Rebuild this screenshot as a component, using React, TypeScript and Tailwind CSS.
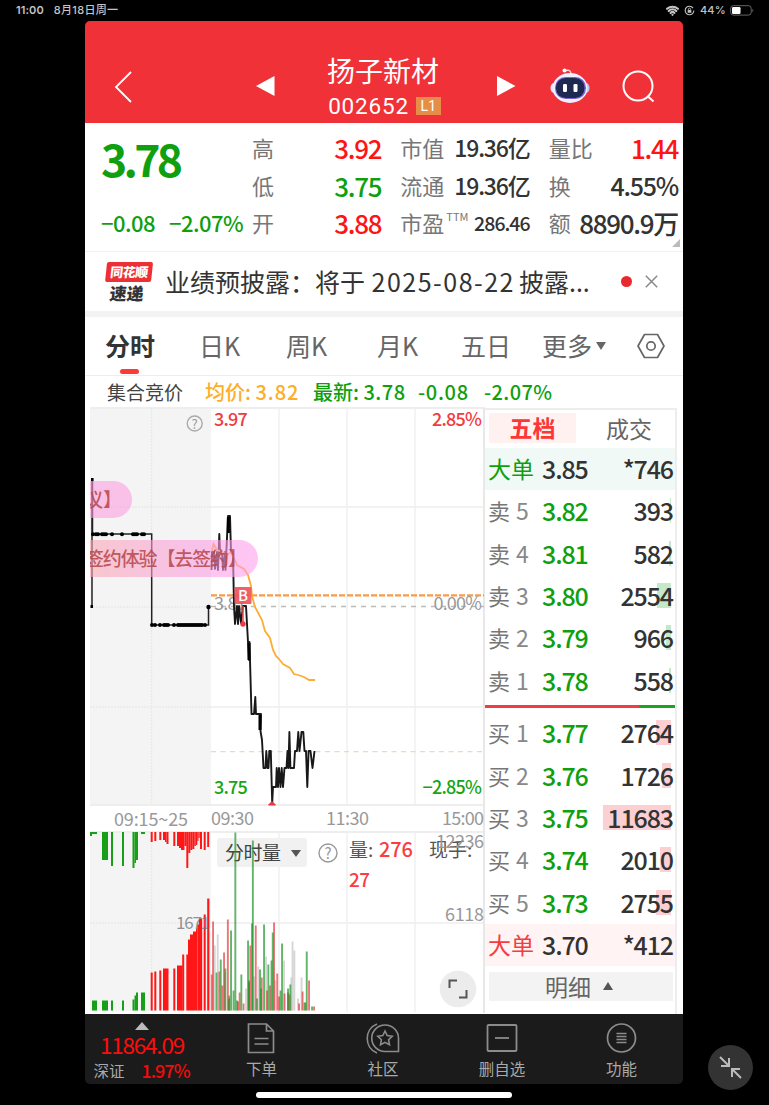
import React from 'react';
import { Wifi } from 'lucide-react';

const quoteColumns = [
  [
    { label: '高', value: '3.92', style: 'text-[26px] font-medium text-[#ff1414]' },
    { label: '低', value: '3.75', style: 'text-[26px] font-medium text-[#0f9f0f]' },
    { label: '开', value: '3.88', style: 'text-[26px] font-medium text-[#ff1414]' },
  ],
  [
    { label: '市值', value: '19.36亿', style: 'text-[23px] font-medium text-[#333]' },
    { label: '流通', value: '19.36亿', style: 'text-[23px] font-medium text-[#333]' },
    { label: '市盈', sup: 'TTM', value: '286.46', style: 'text-[19.5px] font-medium text-[#333]' },
  ],
  [
    { label: '量比', value: '1.44', style: 'text-[26px] font-medium text-[#ff1414]' },
    { label: '换', value: '4.55%', style: 'text-[25px] font-medium text-[#333]' },
    { label: '额', value: '8890.9万', style: 'text-[26px] font-medium text-[#333]' },
  ],
];

const sells = [
  { label: '卖', level: 5, price: '3.82', amount: '393', depth: 1 },
  { label: '卖', level: 4, price: '3.81', amount: '582', depth: 2 },
  { label: '卖', level: 3, price: '3.80', amount: '2554', depth: 14 },
  { label: '卖', level: 2, price: '3.79', amount: '966', depth: 5 },
  { label: '卖', level: 1, price: '3.78', amount: '558', depth: 2 },
];

const buys = [
  { label: '买', level: 1, price: '3.77', amount: '2764', depth: 15 },
  { label: '买', level: 2, price: '3.76', amount: '1726', depth: 9 },
  { label: '买', level: 3, price: '3.75', amount: '11683', depth: 68 },
  { label: '买', level: 4, price: '3.74', amount: '2010', depth: 11 },
  { label: '买', level: 5, price: '3.73', amount: '2755', depth: 15 },
];

const averageLine =
  '212,551 213.5,544 217,550 222,552 227,555 231,552 237,565 244,569 248,575 251,586 252,596 255,607 262,620 265,631 270,638 273,650 276,656 279,659 283,664 290,668 294,674 298,675 304,677 309,680 315,680';

const priceLine =
  '211.5,570 212,552 214,552 215,569 217,552 218,570 219.3,534 220,552 222,552 223,570 225,552 225.5,570 228,516 230,516 231,552 233,554 234,606 235,624 237,606 238,624 239,606 241,623 243,606 246,606 248,642 249,660 249.5,642 251.5,714 254,714 255.3,697 256,714 261,714 260.5,731 262,740 263.5,768 265.5,768 266.3,751 267.5,768 268.5,768 269.3,751 270.8,751 272.2,803 273,787 276,787 276.7,768 278,787 279,768 280.5,787 281.7,768 283,787 284.5,768 286.5,768 287.5,751 288.4,768 289.4,732 290.4,768 294,768 295,751 297,751 298.3,732 299.5,751 301.5,732 303.3,732 304.5,751 306,751 307.3,787 308.6,751 310.5,751 312.5,768 314.5,751';

// [x, width, height]
const auctionTopGreen = [
  [90, 2, 4], [92, 5, 2], [102, 6, 28], [111, 2, 34], [122, 2, 34], [132.5, 2, 36], [134.5, 1.5, 31], [136, 2, 28], [141, 4, 2],
];
const auctionTopRed = [
  [150.7, 2, 10], [154.3, 2, 9], [159.3, 2, 8], [163, 2, 8], [165, 1.5, 10], [166.5, 2, 12], [173.3, 2, 14], [177, 2, 14],
  [179, 2, 16], [181, 3.5, 18], [184.5, 2, 14], [186.3, 2, 36], [188.3, 2, 21], [190.3, 2, 18], [192.3, 2, 17],
  [194.3, 1.5, 14], [195.8, 1.5, 13], [197.3, 1.2, 9], [198.5, 1.2, 6], [200, 2, 17], [203.7, 2, 18], [207.2, 2, 15],
];
const auctionGreen = [
  [92, 5, 10], [102, 6, 10], [111, 2, 10], [122, 2, 10], [132.5, 2, 11], [134.5, 1.5, 15], [136, 2, 18], [141, 4, 18],
];
const auctionRed = [
  [150.7, 2, 38], [154.3, 2, 39], [159.3, 2, 40], [163, 5.5, 42], [173.3, 2, 42], [177, 5.5, 45], [182.2, 2, 56],
  [186.3, 2, 56], [188, 2, 71], [190, 3, 76], [193, 3, 79], [196, 1.5, 82], [197.5, 1.5, 86], [199, 3.2, 92],
  [203.7, 2, 96], [207.2, 2.2, 112],
];

// [x, height]
const volumeGrey = [
  [214.7, 65], [217.7, 76], [225, 38], [246, 22], [254, 34], [258.3, 44], [266, 54], [275, 30], [284, 50], [291.3, 33], [292.5, 69], [294.3, 60], [301.5, 33], [298, 12],
];
const volumeGreen = [
  [216.5, 38], [220.7, 51], [225.3, 42], [231, 80], [233.5, 20], [235.3, 178], [237, 10], [241.3, 36], [248, 70], [249, 30],
  [252, 87], [252.8, 170], [257, 12], [260, 41], [261, 22], [264, 86], [268.3, 46], [271.5, 50], [272.7, 78], [280.5, 20],
  [282, 67], [288, 22], [290.3, 26], [304.5, 8], [306.7, 59], [312, 4], [229, 12],
];
const volumeRed = [
  [211.7, 36], [213, 89], [219.3, 39], [222.3, 25], [224, 58], [227.8, 91], [229.2, 15], [238, 9], [239.6, 18], [243.5, 7],
  [250.3, 65], [249, 28], [255.7, 85], [261.7, 33], [267, 20], [270, 25], [274, 88], [277.2, 37], [279, 14], [284.5, 17], [288, 18],
  [289.5, 16], [299, 7], [302.5, 19], [309, 30], [305.5, 8], [314, 4],
];

const auctionDots = [93, 96, 98, 102, 104, 106, 112, 122, 133, 135, 137, 142, 144];
const auctionDotsLow = [152, 155, 160, 164, 166, 168, 174, 178, 180, 182, 184, 186, 188, 190, 192, 194, 196, 198, 200, 202, 205];

function StatusBar() {
  return (
    <div className="flex h-[21px] items-center justify-between pr-[15px] pl-4 font-[Inter,'Noto_Sans_CJK_SC',sans-serif] text-[11px] font-semibold text-[#c4c4c4]">
      <div className="flex items-center gap-[10px] leading-[21px]">
        <span className="tracking-[0.1px]">11:00</span>
        <span className="font-medium tracking-[0.3px]">8月18日周一</span>
      </div>
      <div className="flex items-center gap-[5px]">
        <Wifi className="h-[13px] w-[13px]" strokeWidth={4} />
        <svg className="h-[11px] w-[11px]" viewBox="0 0 12 12" fill="none" stroke="currentColor">
          <circle cx="6" cy="6" r="4.7" strokeWidth="1.2" strokeDasharray="26 3" />
          <rect x="4" y="5.5" width="4" height="3" fill="currentColor" stroke="none" />
          <path d="M4.8 5.5V4.6a1.2 1.2 0 0 1 2.4 0v.9" strokeWidth=".9" />
        </svg>
        <span className="w-[25px] font-medium tracking-[0.1px]">44%</span>
        <svg className="h-[11px] w-6" viewBox="0 0 24 11">
          <rect x=".7" y=".7" width="20.5" height="9.4" rx="2.6" fill="none" stroke="#666" />
          <rect x="2" y="2" width="8.5" height="7" rx="1.2" fill="#fff" />
          <path d="M22.4 3.8c1.2.4 1.2 3 0 3.4z" fill="#666" />
        </svg>
      </div>
    </div>
  );
}

function Header() {
  return (
    <header className="flex h-[102px] items-start rounded-t-[5px] bg-[#f03238] text-white">
      <svg className="mt-[50px] ml-[29px] h-8 w-5" viewBox="0 0 20 32" fill="none" stroke="#fff" strokeWidth="1.8">
        <path d="M17 1 2 16l15 15" />
      </svg>
      <svg className="mt-[55px] ml-[122px] h-5 w-[19px]" viewBox="0 0 19 20" fill="#fff">
        <path d="M0 10 18.5 0v20z" />
      </svg>
      <div className="ml-[41px] flex w-[134px] flex-col items-center">
        <h1 className="mt-[31px] text-[28px] leading-[36px] whitespace-nowrap">扬子新材</h1>
        <div className="mt-[6px] flex items-center gap-[7px] pl-[3px]">
          <span className="font-[Roboto,sans-serif] text-[22.5px] leading-6 tracking-[0.8px]">002652</span>
          <span className="h-[18px] w-[25px] bg-[#e68e48] text-center font-[Roboto,sans-serif] text-[14px] leading-[18px]">L1</span>
        </div>
      </div>
      <svg className="mt-[55px] ml-[47px] h-5 w-[19px]" viewBox="0 0 19 20" fill="#fff">
        <path d="M18.5 10 0 0v20z" />
      </svg>
      <svg className="mt-[46px] ml-[34px] h-[37px] w-[40px]" viewBox="0 0 40 37">
        <path d="M16 3.5q5-1.5 5 4" fill="none" stroke="#f6d5dc" strokeWidth="1.4" />
        <circle cx="14.5" cy="3.5" r="2" fill="#fff" />
        <ellipse cx="4" cy="21" rx="3.5" ry="5" fill="#dfe3fb" />
        <ellipse cx="36" cy="21" rx="3.5" ry="5" fill="#bfc4f2" />
        <ellipse cx="20" cy="21" rx="17.5" ry="15" fill="#eef0ff" />
        <rect x="5" y="10" width="31" height="22" rx="10.5" fill="#7b62d5" />
        <rect x="6" y="11" width="28.5" height="20" rx="9.5" fill="#1e2950" />
        <rect x="13" y="17" width="4" height="8" rx="1.2" fill="#fff" />
        <rect x="23.5" y="17" width="4" height="8" rx="1.2" fill="#fff" />
      </svg>
      <svg className="mt-[49px] ml-[32px] h-[33px] w-[33px]" viewBox="0 0 33 33" fill="none" stroke="#fff" strokeWidth="2">
        <circle cx="16" cy="16" r="14.5" />
        <path d="m25.5 26 6 5.500" />
      </svg>
    </header>
  );
}

function QuotePanel() {
  return (
    <section className="relative flex h-[129px] border-b border-[#f1f1f1] pr-[6px] pl-4">
      <div className="w-[151px] shrink-0 text-[#0f9f0f]">
        <div className="mt-[9px] text-[44.5px] leading-[52px] font-bold tracking-[-0.085em]">3.78</div>
        <div className="mt-[25px] flex gap-[14px] text-[22px] leading-[26px] font-medium tracking-[-0.025em] whitespace-nowrap">
          <span>−0.08</span>
          <span>−2.07%</span>
        </div>
      </div>
      <div className="mt-[6px] grid h-[113px] flex-1 grid-cols-3 gap-x-5">
        {quoteColumns.map((column, i) => (
          <div key={i}>
            {column.map((item: any) => (
              <div key={item.label} className="flex h-[37.5px] items-center justify-between leading-[37px] whitespace-nowrap">
                <span className="text-[22px] text-[#777]">
                  {item.label}
                  {item.sup && <sup className="relative -top-[11px] ml-[2px] align-baseline text-[11px] leading-none">{item.sup}</sup>}
                </span>
                <span className={`-mr-px tracking-[-0.05em] ${item.style}`}>{item.value}</span>
              </div>
            ))}
          </div>
        ))}
      </div>
      <svg className="absolute right-[3px] bottom-[4px] h-2 w-2" viewBox="0 0 8 8">
        <path d="M8 0v8H0z" fill="#bbb" />
      </svg>
    </section>
  );
}

function NewsBar() {
  return (
    <section className="flex h-[65px] items-center border-b-[6px] border-[#f3f3f3] pl-[19px]">
      <div className="flex w-[48px] -skew-x-6 flex-col items-center leading-none font-black">
        <span className="h-[20px] w-[46px] rounded-[2px] bg-[#ec3035] text-center text-[13px] leading-[19px] tracking-[-0.5px] text-white">同花顺</span>
        <span className="mt-[1px] text-[17px] leading-[19px] text-[#333]">速递</span>
      </div>
      <span className="ml-[13px] w-[440px] pb-[2px] text-[25px] leading-[32px] whitespace-nowrap text-[#333]">
        业绩预披露：将于 <span className="mr-[4px] ml-[1px] tracking-[1.5px]">2025-08-22</span>披露...
      </span>
      <span className="ml-[16px] h-[11px] w-[11px] rounded-full bg-[#e8292d]" />
      <svg className="ml-[13px] h-[13px] w-[13px]" viewBox="0 0 13 13" stroke="#888" strokeWidth="1.5">
        <path d="m.8.8 11.4 11.4M12.2.8.8 12.2" />
      </svg>
    </section>
  );
}

function PeriodTabs() {
  return (
    <nav className="flex h-[59px] border-b border-[#eee] pl-5 text-[25px] leading-[56px] whitespace-nowrap text-[#666]">
      <div className="relative w-[94px] font-bold text-[#333]">
        分时
        <span className="absolute bottom-[1px] left-[15px] h-[5px] w-[19px] rounded-full bg-[#fb3b35]" />
      </div>
      <span className="w-[87px]">日K</span>
      <span className="w-[91px]">周K</span>
      <span className="w-[84px]">月K</span>
      <span className="w-[81px]">五日</span>
      <span className="w-[54px]">更多</span>
      <svg className="mt-[25px] h-[8px] w-[10px]" viewBox="0 0 10 8">
        <path d="M0 0h10L5 8z" fill="#666" />
      </svg>
      <svg className="mt-[16px] ml-[31px] h-[26px] w-7" viewBox="0 0 28 26" fill="none" stroke="#666" strokeWidth="1.7" strokeLinejoin="round">
        <path d="M7.5 1.5h13L27 13l-6.5 11.5h-13L1 13z" />
        <circle cx="14" cy="13" r="4.2" />
      </svg>
    </nav>
  );
}

function Legend() {
  return (
    <div className="flex h-[31px] pl-[22px] text-[20px] leading-[31px] font-medium whitespace-nowrap text-[#0f9f0f]">
      <span className="w-[98px] text-[19px] font-normal text-[#444]">集合竞价</span>
      <span className="w-[108px] text-[#fcae28]">均价: <span className="tracking-[0.9px]">3.82</span></span>
      <span className="w-[105px]">最新: <span className="tracking-[0.5px]">3.78</span></span>
      <span className="w-[66px] tracking-[0.7px]">-0.08</span>
      <span className="tracking-[0.4px]">-2.07%</span>
    </div>
  );
}

function Bars({ data, color, y, down }: { data: number[][]; color: string; y: number; down?: boolean }) {
  return (
    <g fill={color}>
      {data.map(([x, w, h], i) => (
        <rect key={i} x={x} y={down ? y : y - h} width={w} height={h} />
      ))}
    </g>
  );
}

function VolumeBars({ data, color }: { data: number[][]; color: string }) {
  return (
    <g fill={color} fillOpacity="0.7">
      {data.map(([x, h], i) => (
        <rect key={i} x={x - 0.9} y={1010.5 - h} width="1.9" height={h} />
      ))}
    </g>
  );
}

function Chart() {
  return (
    <div className="h-[607px] w-[395px] shrink-0">
      <svg className="block h-[607px] w-[395px] font-['Noto_Sans_CJK_SC',sans-serif]" viewBox="90 407 395 607">
        <defs>
          <linearGradient id="pill" x1="0" x2="1">
            <stop offset="0" stopColor="#f9a8b4" />
            <stop offset="0.6" stopColor="#fb9fe0" />
            <stop offset="1" stopColor="#ff9fee" />
          </linearGradient>
        </defs>
        <rect x="90" y="408" width="121" height="397" fill="#f4f4f4" />
        <rect x="90" y="832" width="121" height="179" fill="#f4f4f4" />
        <g stroke="#eee" strokeWidth="1.3">
          <path d="M90 408h395M90 805h395M90 832h395" strokeWidth="2" />
          <path d="M211 507h273M211 707h273M211 923h273" />
          <path d="M279 408v397M347 408v397M415 408v397M279 832v180M347 832v180M415 832v180" />
          <path d="M484 408v605" strokeWidth="2" stroke="#e8e8e8" />
          <path d="M151.5 408v397M151.5 832v180M90 507h121M90 607h121M90 707h121M90 923h121" stroke="#e9e9e9" strokeDasharray="2 1" />
        </g>

        <path d="M211 606.5h273" stroke="#bbb" strokeWidth="1.5" strokeDasharray="5 5" />
        <path d="M211 751.7h273" stroke="#ecd9bf" strokeWidth="1.3" strokeDasharray="5 4.5" />
        <path d="M211 595.3h273" stroke="#fc9a4a" strokeWidth="2.2" strokeDasharray="6 2" />

        <g fontSize="18" fontWeight="500" letterSpacing="-0.8">
          <text x="214" y="610" fill="#999" fontWeight="400">3.87</text>
          <text x="481" y="610" fill="#999" fontWeight="400" textAnchor="end">0.00%</text>
          <text x="214" y="426" fill="#f13a43">3.97</text>
          <text x="481" y="426" fill="#f13a43" textAnchor="end">2.85%</text>
          <text x="214" y="794" fill="#14a514">3.75</text>
          <text x="481" y="794" fill="#14a514" textAnchor="end">−2.85%</text>
        </g>

        <path d="M92 478v129" stroke="#222" strokeWidth="1.5" />
        <path d="M92.5 478v56h59.2v91h56.8v-18" fill="none" stroke="#222" strokeWidth="1.5" />
        <g fill="#000">
          <rect x="91" y="478" width="2.5" height="3" />
          <rect x="90.5" y="605" width="2.5" height="3" />
          {auctionDots.map((x) => <circle key={x} cx={x} cy="534.2" r="2" />)}
          {auctionDotsLow.map((x) => <circle key={x} cx={x} cy="625" r="2" />)}
          <circle cx="208.5" cy="607" r="2.2" />
        </g>

        <polyline points={priceLine} fill="none" stroke="#181818" strokeWidth="1.9" strokeLinejoin="round" />
        <path d="M228.4 517v16M249 643v17M260 715v15" stroke="#000" strokeWidth="3" />
        <polyline points={averageLine} fill="none" stroke="#fdac36" strokeWidth="1.8" />
        <path d="M243 606v18" stroke="#f04b52" strokeWidth="1.5" />
        <circle cx="243" cy="624" r="2.7" fill="#f03a42" />
        <rect x="234.5" y="587" width="17" height="17" rx="1" fill="#ee5057" fillOpacity="0.9" />
        <text x="243" y="601" fontSize="15" fontWeight="500" fill="#fff" textAnchor="middle">B</text>
        <path d="M272 801.5l3.5 3.5h-7z" fill="#ec3540" stroke="#ec3540" />

        <g fontSize="19" fill="#b84a50">
          <path d="M90 481h23.5a18.5 18.5 0 0 1 0 37H90z" fill="#fb9fe0" fillOpacity="0.6" />
          <path d="M90 540h149.5a18.5 18.5 0 0 1 0 37H90z" fill="url(#pill)" fillOpacity="0.6" />
          <g fontWeight="500" fillOpacity="0.9">
            <text x="84" y="507">议】</text>
            <text x="85" y="566" textLength="162">签约体验【去签约】</text>
          </g>
        </g>

        <circle cx="194.7" cy="423.5" r="7.5" fill="none" stroke="#aaa" strokeWidth="1.4" />
        <text x="194.7" y="428.5" fontSize="13" fill="#999" textAnchor="middle">?</text>

        <g fontSize="18" fill="#999">
          <text x="114" y="826" textLength="74">09:15~25</text>
          <text x="211" y="825" textLength="43">09:30</text>
          <text x="326" y="825" textLength="43">11:30</text>
          <text x="442" y="825" textLength="42">15:00</text>
        </g>

        <rect x="217" y="838" width="90" height="29" rx="3" fill="#f1f1f1" />
        <text x="225" y="860" fontSize="19" fill="#444" textLength="56">分时量</text>
        <path d="M291 850h10l-5 7z" fill="#555" />
        <circle cx="328" cy="853" r="9" fill="none" stroke="#999" strokeWidth="1.4" />
        <text x="328" y="859" fontSize="15" fill="#999" textAnchor="middle">?</text>
        <g fontSize="19" fill="#555">
          <text x="349" y="857">量:</text>
          <text x="379" y="857" fill="#fb3d42" fontSize="20" fontWeight="500" textLength="34">276</text>
          <text x="429" y="857">现手:</text>
          <text x="349" y="887" fill="#fb3d42" fontWeight="500" textLength="21">27</text>
        </g>
        <g fontSize="18" fill="#999">
          <text x="436" y="848" textLength="48">12236</text>
          <text x="445" y="921" textLength="39">6118</text>
        </g>

        <Bars data={auctionTopGreen} color="#17a017" y={832} down />
        <Bars data={auctionTopRed} color="#ff1717" y={832} down />
        <Bars data={auctionGreen} color="#17a017" y={1010.5} />
        <Bars data={auctionRed} color="#ff1717" y={1010.5} />
        <text x="176" y="929" fontSize="17" fill="#777" fillOpacity="0.8" textLength="34">1671</text>
        <VolumeBars data={volumeGrey} color="#c4c4c4" />
        <VolumeBars data={volumeRed} color="#e63a3e" />
        <VolumeBars data={volumeGreen} color="#21962b" />

        <circle cx="458" cy="989" r="18.3" fill="#ececec" />
        <path d="M449.5 988v-7.5h7.5M466.5 990v7.500h-7.500" fill="none" stroke="#555" strokeWidth="2" />
      </svg>
    </div>
  );
}

function OrderRow({ row, side }: { row: any; side: 'sell' | 'buy' }) {
  return (
    <div className="flex h-[42.4px] items-center pr-[2px] pb-[2px] pl-[3px] leading-[40px]">
      <span className="w-[28px] text-[22px] text-[#777]">{row.label}</span>
      <span className="w-[26px] text-[23px] text-[#888]">{row.level}</span>
      <span className="text-[25px] font-medium tracking-[-0.045em] text-[#0f9f0f]">{row.price}</span>
      <span className="relative ml-auto text-[25px] font-medium tracking-[-0.045em] text-[#333]">
        <span
          className={`absolute top-[8px] right-[2px] h-[25px] ${side === 'sell' ? 'bg-[#c5e8c8]' : 'bg-[#fcd0d2]'}`}
          style={{ width: row.depth }}
        />
        <span className="relative">{row.amount}</span>
      </span>
    </div>
  );
}

function OrderBook() {
  return (
    <aside className="mt-[1px] w-[192px] shrink-0 border-r-2 border-[#ededed] whitespace-nowrap">
      <div className="flex h-10 items-center border-t-2 border-[#ededed] pb-[2px] pl-1 text-[23px]">
        <span className="h-[30px] w-[87px] rounded-[2px] bg-[#fff1f0] text-center leading-[29px] font-bold text-[#fb3737]">五档</span>
        <span className="ml-[30px] leading-[29px] text-[#666]">成交</span>
      </div>
      <div className="flex h-[42px] items-center bg-[#f0f9f5] pr-[2px] pb-[2px] pl-[3px] leading-[40px]">
        <span className="w-[54px] text-[23px] text-[#0f9f0f]">大单</span>
        <span className="text-[25px] font-medium tracking-[-0.045em] text-[#333]">3.85</span>
        <span className="ml-auto text-[25px] font-medium tracking-[-0.045em] text-[#333]">*746</span>
      </div>
      {sells.map((row) => <OrderRow key={row.level} row={row} side="sell" />)}
      <div className="mt-[3px] mb-[4px] flex h-[3px]">
        <span className="w-[154px] bg-[#f03c43]" />
        <span className="flex-1 bg-[#1ba51f]" />
      </div>
      {buys.map((row) => <OrderRow key={row.level} row={row} side="buy" />)}
      <div className="flex h-[42px] items-center bg-[#fff3f3] pr-[2px] pb-[2px] pl-[3px] leading-[40px]">
        <span className="w-[54px] text-[23px] text-[#f43c42]">大单</span>
        <span className="text-[25px] font-medium tracking-[-0.045em] text-[#333]">3.70</span>
        <span className="ml-auto text-[25px] font-medium tracking-[-0.045em] text-[#333]">*412</span>
      </div>
      <div className="mt-[6px] mr-[2px] ml-1 flex h-[29px] items-center justify-center gap-3 bg-[#f3f3f3] pr-1 text-[23px] leading-[28px] text-[#666]">
        明细
        <svg className="h-[8px] w-[10px]" viewBox="0 0 10 8">
          <path d="M5 0 10 8H0z" fill="#555" />
        </svg>
      </div>
    </aside>
  );
}

function Footer() {
  return (
    <footer className="flex h-[70px] rounded-b-[5px] bg-[#1b1b1b] text-[15.5px] leading-[22px] whitespace-nowrap text-[#aaa]">
      <div className="flex w-[116px] flex-col items-center">
        <svg className="mt-[8px] mr-[3px] h-[8px] w-[14px]" viewBox="0 0 14 8">
          <path d="m7 0 7 8H0z" fill="#bbb" />
        </svg>
        <span className="mr-[2px] text-[22.5px] leading-[29px] tracking-[-0.055em] text-[#fb0d0d]">11864.09</span>
        <div className="mr-[3px] flex items-center gap-[17px] leading-[22px]">
          <span>深证</span>
          <span className="text-[18px] font-medium tracking-[-0.055em] text-[#f30c0c]">1.97%</span>
        </div>
      </div>
      <div className="flex w-[121px] flex-col items-center pt-[9px]">
        <svg className="h-[31px] w-[29px]" viewBox="0 0 29 31" fill="none" stroke="#8c8c8c" strokeWidth="1.7">
          <path d="M1.500 1h18l7 7v21.500h-25zM19.500 1v7h7M7.500 15.500h14M7.500 21h14" />
        </svg>
        <span className="mt-[3px]">下单</span>
      </div>
      <div className="flex w-[122px] flex-col items-center pt-[9px]">
        <svg className="h-[31px] w-[34px]" viewBox="0 0 34 31" fill="none" stroke="#8c8c8c" strokeWidth="1.6">
          <path d="M19 2a13.200 13.200 0 1 0 0 26.500h13.500V15.200A13.300 13.300 0 0 0 19 2z" />
          <path d="M11 1C-2 6-2 25 11 30" />
          <path d="m19 8 2.200 4.600 5 .7-3.600 3.500.9 5-4.500-2.400-4.500 2.400.9-5-3.600-3.500 5-.7z" />
        </svg>
        <span className="mt-[3px]">社区</span>
      </div>
      <div className="flex w-[116px] flex-col items-center pt-[9px]">
        <svg className="h-[31px] w-8" viewBox="0 0 32 31" fill="none" stroke="#8c8c8c" strokeWidth="1.8">
          <rect x="1.5" y="2" width="29" height="26" rx="1" />
          <path d="M9 15h14" />
        </svg>
        <span className="mt-[3px]">删自选</span>
      </div>
      <div className="flex w-[123px] flex-col items-center pt-[9px]">
        <svg className="h-[31px] w-[31px]" viewBox="0 0 31 31" fill="none" stroke="#8c8c8c" strokeWidth="1.7">
          <circle cx="15.5" cy="15" r="14" />
          <path d="M10.500 10.500h10M10.500 13.500h10M10.500 16.500h10M10.500 19.500h10" strokeWidth="1.3" />
        </svg>
        <span className="mt-[3px]">功能</span>
      </div>
    </footer>
  );
}

export default function App() {
  return (
    <div className="relative h-[1105px] w-[769px] overflow-hidden bg-black font-['Noto_Sans_CJK_SC',sans-serif]">
      <StatusBar />
      <div className="ml-[85px] w-[598px]">
        <Header />
        <main className="bg-white">
          <QuotePanel />
          <NewsBar />
          <PeriodTabs />
          <Legend />
          <div className="flex h-[607px] overflow-hidden pl-[5px]">
            <Chart />
            <OrderBook />
          </div>
        </main>
        <Footer />
        <div className="mx-auto mt-[8px] h-[6px] w-[256px] rounded-full bg-white" />
      </div>
      <button className="absolute right-[16px] bottom-[15px] flex h-[45px] w-[45px] items-center justify-center rounded-full bg-[#333]">
        <svg className="h-[23px] w-[23px]" viewBox="0 0 23 23" fill="none" stroke="#bbb" strokeWidth="2">
          <path d="m1 1 8.500 8.500M10 2v8H2M22 22l-8.500-8.500M13 21v-8h8" />
        </svg>
      </button>
    </div>
  );
}
